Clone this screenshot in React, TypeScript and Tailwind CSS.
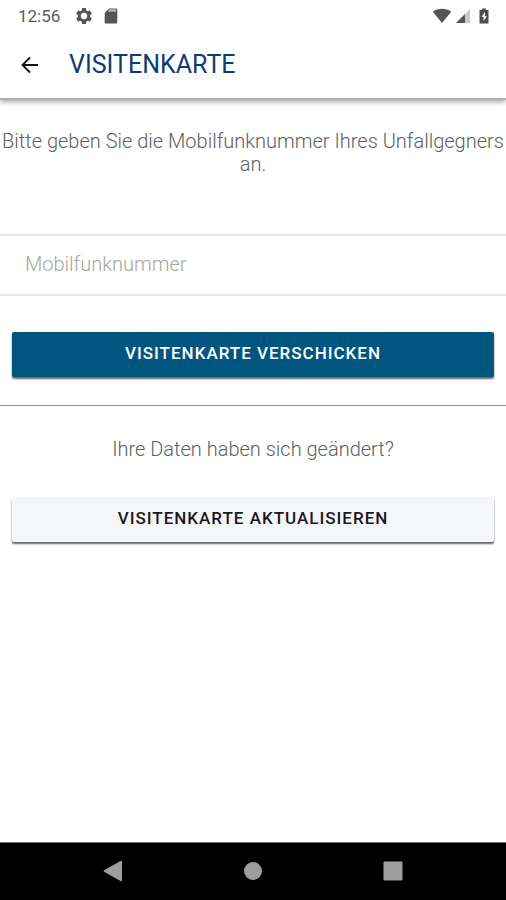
import { useState } from "react";

function StatusBar() {
  return (
    <div className="flex h-8 items-center pr-4 pl-[18px] text-[#5c5c5c]">
      <span className="text-[17px] leading-5">12:56</span>
      <svg className="ml-[14px] size-5" viewBox="0 0 24 24" fill="#555" aria-hidden="true">
        <path
          fillRule="evenodd"
          d="M19.14 12.94c.04-.3.06-.61.06-.94s-.02-.64-.07-.94l2.03-1.58a.5.5 0 0 0 .12-.61l-1.92-3.32a.49.49 0 0 0-.59-.22l-2.39.96a7 7 0 0 0-1.62-.94l-.36-2.54A.48.48 0 0 0 13.92 2.4h-3.84a.48.48 0 0 0-.47.41l-.36 2.54c-.59.24-1.13.57-1.62.94l-2.39-.96a.48.48 0 0 0-.59.22L2.74 8.87a.47.47 0 0 0 .12.61l2.03 1.58a6 6 0 0 0-.02 1.88l-2.03 1.58a.5.5 0 0 0-.12.61l1.92 3.32c.12.22.37.29.59.22l2.39-.96c.5.38 1.03.7 1.62.94l.36 2.54c.05.24.24.41.48.41h3.84c.24 0 .44-.17.47-.41l.36-2.54a7 7 0 0 0 1.62-.94l2.39.96c.22.08.47 0 .59-.22l1.92-3.32a.47.47 0 0 0-.12-.61zM12 15.800a3.800 3.800 0 1 1 0-7.600 3.800 3.800 0 0 1 0 7.600z"
        />
      </svg>
      <svg className="ml-[10px] h-4 w-[14px]" viewBox="0 0 14 16" aria-hidden="true">
        <path d="M5 .5h7a1.300 1.300 0 0 1 1.300 1.300v12.400a1.300 1.300 0 0 1-1.300 1.300H2a1.300 1.300 0 0 1-1.300-1.300V5z" fill="#555" />
        <path d="M5 1.300h7v2.400H4z" fill="#b4b4b4" />
      </svg>
      <div className="ml-auto flex items-center">
        <svg className="h-4 w-5" viewBox="0 0 20 16" aria-hidden="true">
          <path d="M.8 3.700C3.500 1.700 6.500.8 10 .8s6.500.9 9.200 2.900L10 15z" fill="#555" />
        </svg>
        <svg className="ml-[3px] size-4" viewBox="0 0 16 16" aria-hidden="true">
          <path d="M15 1v14H1z" fill="#c9c9c9" />
          <path d="M10 6v9H1z" fill="#555" />
        </svg>
        <svg className="ml-[7px] h-4 w-3" viewBox="0 0 12 16" aria-hidden="true">
          <path d="M4 .5h4V2h2.500v13.500h-9V2H4z" fill="#4d4d4d" />
          <path d="M7 4 3.500 8.800h2V13L9 8.200H7z" fill="#fff" />
        </svg>
      </div>
    </div>
  );
}

function SystemNav() {
  return (
    <nav
      aria-label="System"
      className="grid h-[58px] grid-cols-3 items-center justify-items-center border-t border-[#777] bg-black px-[43px] pb-[2px]"
    >
      <button type="button" aria-label="Zurück">
        <svg className="h-[22px] w-5" viewBox="0 0 20 22" fill="#9e9e9e">
          <path d="M18 .8q1 0 1 1v18.400q0 1-1 1L1 11.700q-.8-.7 0-1.400z" />
        </svg>
      </button>
      <button type="button" aria-label="Startbildschirm">
        <svg className="size-[18px]" viewBox="0 0 18 18" fill="#9e9e9e">
          <circle cx="9" cy="9" r="9" />
        </svg>
      </button>
      <button type="button" aria-label="Übersicht">
        <svg className="size-5" viewBox="0 0 20 20" fill="#9e9e9e">
          <rect x=".5" y=".5" width="19" height="19" rx="1" />
        </svg>
      </button>
    </nav>
  );
}

export default function App() {
  const [phone, setPhone] = useState("");

  return (
    <div className="flex min-h-screen flex-col bg-white font-[Roboto,sans-serif]">
      <header className="border-b-2 border-[#b0b0b0] shadow-[0_2px_5px_rgba(0,0,0,0.35)]">
        <StatusBar />
        <div className="flex h-[66px] items-center pl-5">
          <button type="button" aria-label="Zurück">
            <svg className="size-5" viewBox="0 0 20 20" fill="none" stroke="#111" strokeWidth="1.800">
              <path d="M18 10H3M10 2.500 2.500 10l7.500 7.500" />
            </svg>
          </button>
          <h1 className="ml-[29px] text-[25px] leading-8 text-[#0c3c78]">VISITENKARTE</h1>
        </div>
      </header>

      <main className="flex-1 overflow-x-hidden text-[#606060]">
        <p className="-mx-1 pt-[30px] text-center text-xl leading-[23px] font-light">
          Bitte geben Sie die Mobilfunknummer Ihres Unfallgegners an.
        </p>

        <input
          type="tel"
          aria-label="Mobilfunknummer"
          placeholder="Mobilfunknummer"
          value={phone}
          onChange={(e) => setPhone(e.target.value)}
          className="mt-[58px] block h-[62px] w-full border-y-2 border-[#e8e8e8] px-[25px] pb-[2px] text-xl font-light text-[#555] outline-none placeholder:text-[#a6a6a6]"
        />

        <div className="px-3 py-9">
          <button
            type="button"
            className="flex h-[45px] w-full items-center justify-center rounded-xs bg-[#00567f] pb-[2px] text-[17px] font-medium tracking-[1px] text-white shadow-[0_2px_2px_rgba(0,0,0,0.6)]"
          >
            VISITENKARTE VERSCHICKEN
          </button>
        </div>

        <hr className="-mt-2 border-[#8c8c8c]" />

        <p className="pt-8 text-center text-xl leading-[23px] font-light">Ihre Daten haben sich geändert?</p>

        <div className="px-3 py-9">
          <button
            type="button"
            className="flex h-[45px] w-full items-center justify-center rounded-xs bg-[#f4f6fa] pb-[2px] text-[17px] font-medium tracking-[1px] text-[#1a1a1a] shadow-[0_2px_2px_rgba(0,0,0,0.6)]"
          >
            VISITENKARTE AKTUALISIEREN
          </button>
        </div>
      </main>

      <SystemNav />
    </div>
  );
}
